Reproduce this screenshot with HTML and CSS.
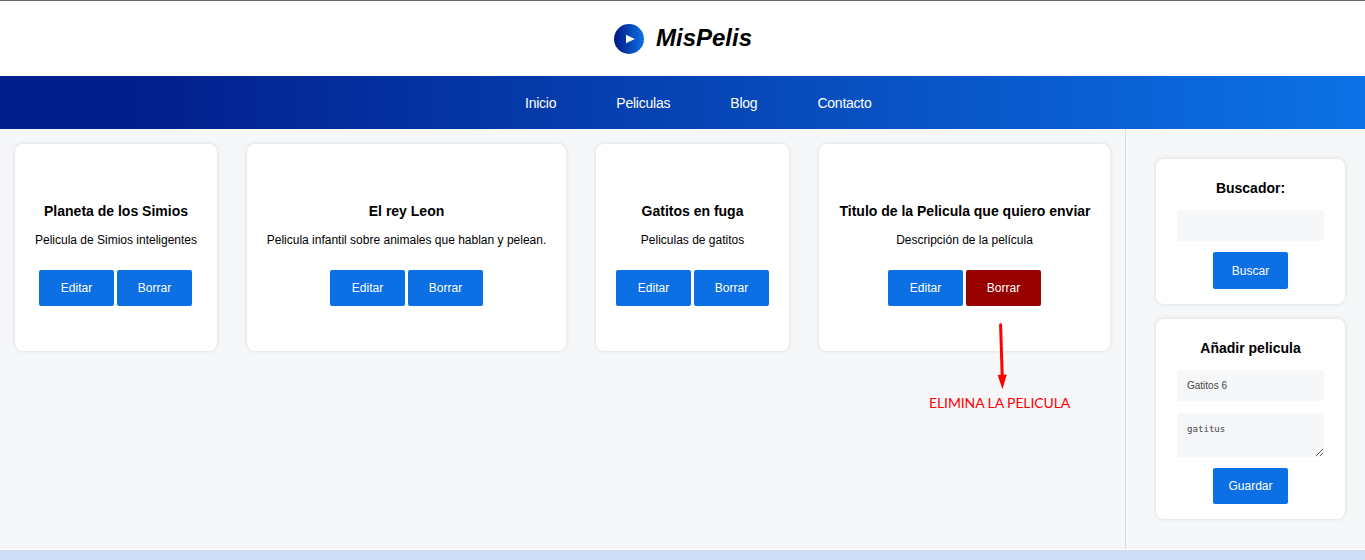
FILE: index.html
```html
<!DOCTYPE html>
<html lang="es">
<head>
<meta charset="utf-8">
<title>MisPelis</title>
<link rel="stylesheet" href="styles.css">
</head>
<body>
<div class="layout">
  <header class="header">
    <svg class="logo" viewBox="0 0 30 30">
      <defs><linearGradient id="disc"><stop offset="0.1" stop-color="#021f8d"/><stop offset="1" stop-color="#0c72e6"/></linearGradient></defs>
      <circle cx="15" cy="15" r="15" fill="url(#disc)"/>
      <path d="M12 10.8L20.8 15L12 19.2Z" fill="#fff"/>
    </svg>
    <h1 class="brand">MisPelis</h1>
  </header>
  <nav class="nav">
    <a class="nav-link">Inicio</a>
    <a class="nav-link">Peliculas</a>
    <a class="nav-link">Blog</a>
    <a class="nav-link">Contacto</a>
  </nav>
  <div class="main">
    <section class="content">
      <article class="card card-planeta">
        <h3 class="title">Planeta de los Simios</h3>
        <p class="description">Pelicula de Simios inteligentes</p>
        <div class="actions"><button class="btn">Editar</button><button class="btn">Borrar</button></div>
      </article>
      <article class="card card-leon">
        <h3 class="title">El rey Leon</h3>
        <p class="description">Pelicula infantil sobre animales que hablan y pelean.</p>
        <div class="actions"><button class="btn">Editar</button><button class="btn">Borrar</button></div>
      </article>
      <article class="card card-gatitos">
        <h3 class="title">Gatitos en fuga</h3>
        <p class="description">Peliculas de gatitos</p>
        <div class="actions"><button class="btn">Editar</button><button class="btn">Borrar</button></div>
      </article>
      <article class="card card-titulo">
        <h3 class="title">Titulo de la Pelicula que quiero enviar</h3>
        <p class="description">Descripción de la película</p>
        <div class="actions"><button class="btn">Editar</button><button class="btn btn-danger">Borrar</button></div>
        <div class="note">
          <svg class="arrow" viewBox="0 0 12 68"><path d="M4.6 2.8L6.2 54" stroke="#f00" stroke-width="3" stroke-linecap="round"/><path d="M1.6 53L10.8 52.6L6.5 67.2Z" fill="#f00"/></svg>
          <span class="note-text">ELIMINA LA PELICULA</span>
        </div>
      </article>
    </section>
    <aside class="sidebar">
      <div class="panel search">
        <h3 class="title">Buscador:</h3>
        <input class="field" type="text">
        <button class="btn btn-search">Buscar</button>
      </div>
      <div class="panel add">
        <h3 class="title">Añadir pelicula</h3>
        <input class="field" type="text" value="Gatitos 6">
        <textarea class="field area">gatitus</textarea>
        <button class="btn btn-save">Guardar</button>
      </div>
    </aside>
  </div>
  <footer class="footer"></footer>
</div>
</body>
</html>
```
FILE: styles.css
```css
* { box-sizing: border-box; margin: 0; padding: 0; }
body { font-family: "Liberation Sans", Arial, sans-serif; background: #f5f7f9; overflow: hidden; color: #000; }
.layout { height: 560px; display: flex; flex-direction: column; }
.header { height: 76px; flex: none; display: flex; justify-content: center; align-items: center; gap: 12px; padding-left: 1px; background: #fff; border-top: 1px solid #666; }
.logo { width: 30px; height: 30px; }
.brand { font-size: 24px; line-height: 28px; padding-bottom: 2px; font-style: italic; }
.nav { height: 53px; flex: none; display: flex; align-items: center; gap: 60px; padding: 0 0 0 525px; background: linear-gradient(90deg, #021f8d 10%, #0c72e6 100%); }
.nav-link { color: #fff; font-size: 14px; letter-spacing: -0.23px; line-height: 20px; }
.main { flex: 1; display: flex; min-height: 0; }
.content { width: 1125px; display: flex; align-items: flex-start; gap: 30px; padding: 15px; }
.card, .panel { background: #fff; border-radius: 8px; box-shadow: 0 0 4px rgba(0, 0, 0, 0.12); display: flex; flex-direction: column; align-items: center; flex: none; }
.card { height: 207px; padding-top: 57px; position: relative; }
.card-planeta { width: 202px; }
.card-planeta .actions { margin-right: 1px; }
.card-leon { width: 319px; }
.card-gatitos { width: 193px; }
.card-titulo { width: 291px; }
.card-titulo .title { padding-left: 1px; }
.title { font-size: 14px; line-height: 20px; white-space: nowrap; }
.description { font-size: 12px; line-height: 18px; margin-top: 10px; white-space: nowrap; }
.actions { display: flex; gap: 3px; margin-top: 21px; }
.btn { width: 75px; height: 36px; border: 0; border-radius: 2px; background: #0c70e4; color: #fff; font: 12px "Liberation Sans", Arial, sans-serif; }
.btn-danger { background: #980000; }
.note { position: absolute; left: 110px; top: 178px; display: flex; flex-direction: column; width: 160px; }
.arrow { width: 12px; height: 68px; margin-left: 67px; fill: none; }
.note-text { font: 14px/20px Lato, "Open Sans", sans-serif; letter-spacing: -0.1px; color: #f00; white-space: nowrap; margin-top: 3px; }
.sidebar { flex: 1; border-left: 1px solid #dadce0; padding: 30px 20px 0 30px; display: flex; flex-direction: column; gap: 15px; }
.panel { width: 189px; padding-top: 19px; }
.search { height: 145px; }
.add { height: 200px; }
.field { width: 147px; height: 31px; border: 0; border-radius: 3px; background: #f5f7f9; color: #444; margin-top: 12px; padding: 0 10px; font: 10px "Liberation Sans", Arial, sans-serif; }
.area { height: 44px; padding: 10px; font: 9.1px/12px "DejaVu Sans Mono", monospace; overflow: hidden; flex: none; }
.btn-search { margin-top: 11px; height: 37px; }
.btn-save { margin-top: 11px; }
.footer { height: 11px; flex: none; background: #d0ddf7; border-top: 1px solid #fff; }
```
